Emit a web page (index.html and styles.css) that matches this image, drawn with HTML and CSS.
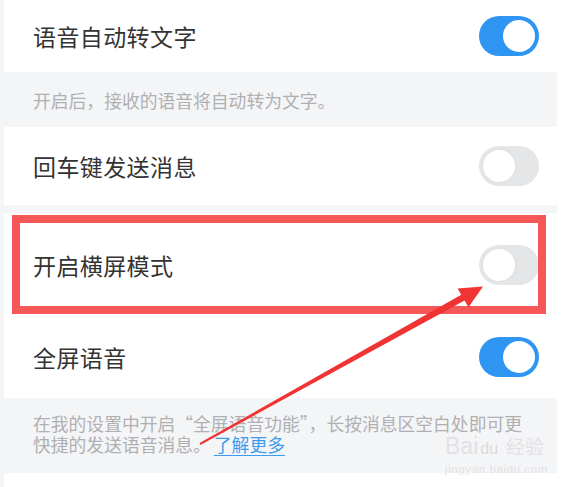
FILE: index.html
```html
<!DOCTYPE html>
<html lang="zh">
<head>
<meta charset="utf-8">
<link rel="stylesheet" href="styles.css">
</head>
<body>
<div class="panel">
  <div class="row row-top">
    <span class="label">语音自动转文字</span>
    <span class="toggle on"><span class="knob"></span></span>
  </div>
  <div class="desc desc-one">开启后，接收的语音将自动转为文字。</div>
  <div class="row row-mid">
    <span class="label">回车键发送消息</span>
    <span class="toggle off"><span class="knob"></span></span>
  </div>
  <div class="gap"></div>
  <div class="row row-tall">
    <span class="label">开启横屏模式</span>
    <span class="toggle off"><span class="knob"></span></span>
  </div>
  <div class="row row-four">
    <span class="label">全屏语音</span>
    <span class="toggle on"><span class="knob"></span></span>
  </div>
  <div class="desc desc-two">在我的设置中开启“全屏语音功能”，长按消息区空白处即可更<br>快捷的发送语音消息。<a class="link">了解更多</a></div>
  <div class="row row-last"></div>
</div>

<div class="highlight"></div>

<svg class="arrow" width="579" height="487" viewBox="0 0 579 487">
  <polygon fill="#f03434" points="200.4,444.9 464.6,300.6 468.5,307.2 483,286.5 457.6,288.6 461.2,294.8 199.6,443.1"/>
</svg>

<div class="watermark">
  <div class="wm-main"><span>Bai</span><span class="wm-du">du</span><span class="wm-cn">经验</span></div>
  <div class="wm-url">jingyan.baidu.com</div>
</div>
</body>
</html>
```

FILE: styles.css
```css
* { box-sizing: border-box; }
html, body { margin: 0; padding: 0; background: #ffffff; }
body {
  width: 579px;
  height: 487px;
  overflow: hidden;
  position: relative;
  font-family: "Noto Sans CJK SC", "Noto Sans", sans-serif;
}
.panel {
  width: 557px;
  height: 487px;
  background: #f4f5f7;
  padding-left: 4px;
  display: flex;
  flex-direction: column;
}
.row {
  background: #ffffff;
  display: flex;
  align-items: center;
  justify-content: space-between;
  padding: 0 18px 0 29px;
  flex: none;
}
.row-top { height: 72px; }
.row-mid { height: 78px; }
.row-tall { height: 103px; }
.row-four { height: 82px; }
.row-last { height: 20px; }
.gap { height: 8px; flex: none; }
.label {
  font-size: 23px;
  letter-spacing: 0.4px;
  color: #333333;
}
.desc {
  color: #b0b0b2;
  font-size: 17.8px;
  padding-left: 29px;
  flex: none;
}
.desc-one {
  height: 55px;
  display: flex;
  align-items: center;
}
.desc-two {
  height: 75px;
  line-height: 20.5px;
  padding-top: 15px;
}
.link {
  color: #3d9bf0;
  text-decoration: underline;
  text-underline-offset: 3px;
  margin-left: 3px;
}
.toggle {
  width: 60px;
  height: 40px;
  border-radius: 20px;
  position: relative;
  flex: none;
}
.toggle.on { background: #2f95f3; }
.toggle.off { background: #e5e6e8; }
.knob {
  position: absolute;
  top: 4px;
  width: 32px;
  height: 32px;
  border-radius: 50%;
  background: #ffffff;
}
.toggle.on .knob { right: 4px; }
.toggle.off .knob { left: 2px; top: 2px; width: 36px; height: 36px; border: 2px solid #e2e3e5; }
.highlight {
  position: absolute;
  left: 12px;
  top: 215px;
  width: 534px;
  height: 99px;
  border: 8px solid #f65858;
}
.arrow {
  position: absolute;
  left: 0;
  top: 0;
}
.watermark {
  position: absolute;
  left: 445px;
  top: 434px;
  color: #e2e2e4;
  font-family: "Liberation Sans", sans-serif;
}
.wm-main {
  font-size: 23px;
  line-height: 24px;
  display: flex;
  align-items: baseline;
}
.wm-du {
  font-size: 16px;
  margin-left: 2px;
  color: #dadadc;
}
.wm-cn {
  font-family: "Noto Sans CJK SC", sans-serif;
  font-size: 19px;
  margin-left: 8px;
}
.wm-url {
  font-size: 11.5px;
  line-height: 12px;
  margin-top: 2px;
  letter-spacing: 0.6px;
}
```
